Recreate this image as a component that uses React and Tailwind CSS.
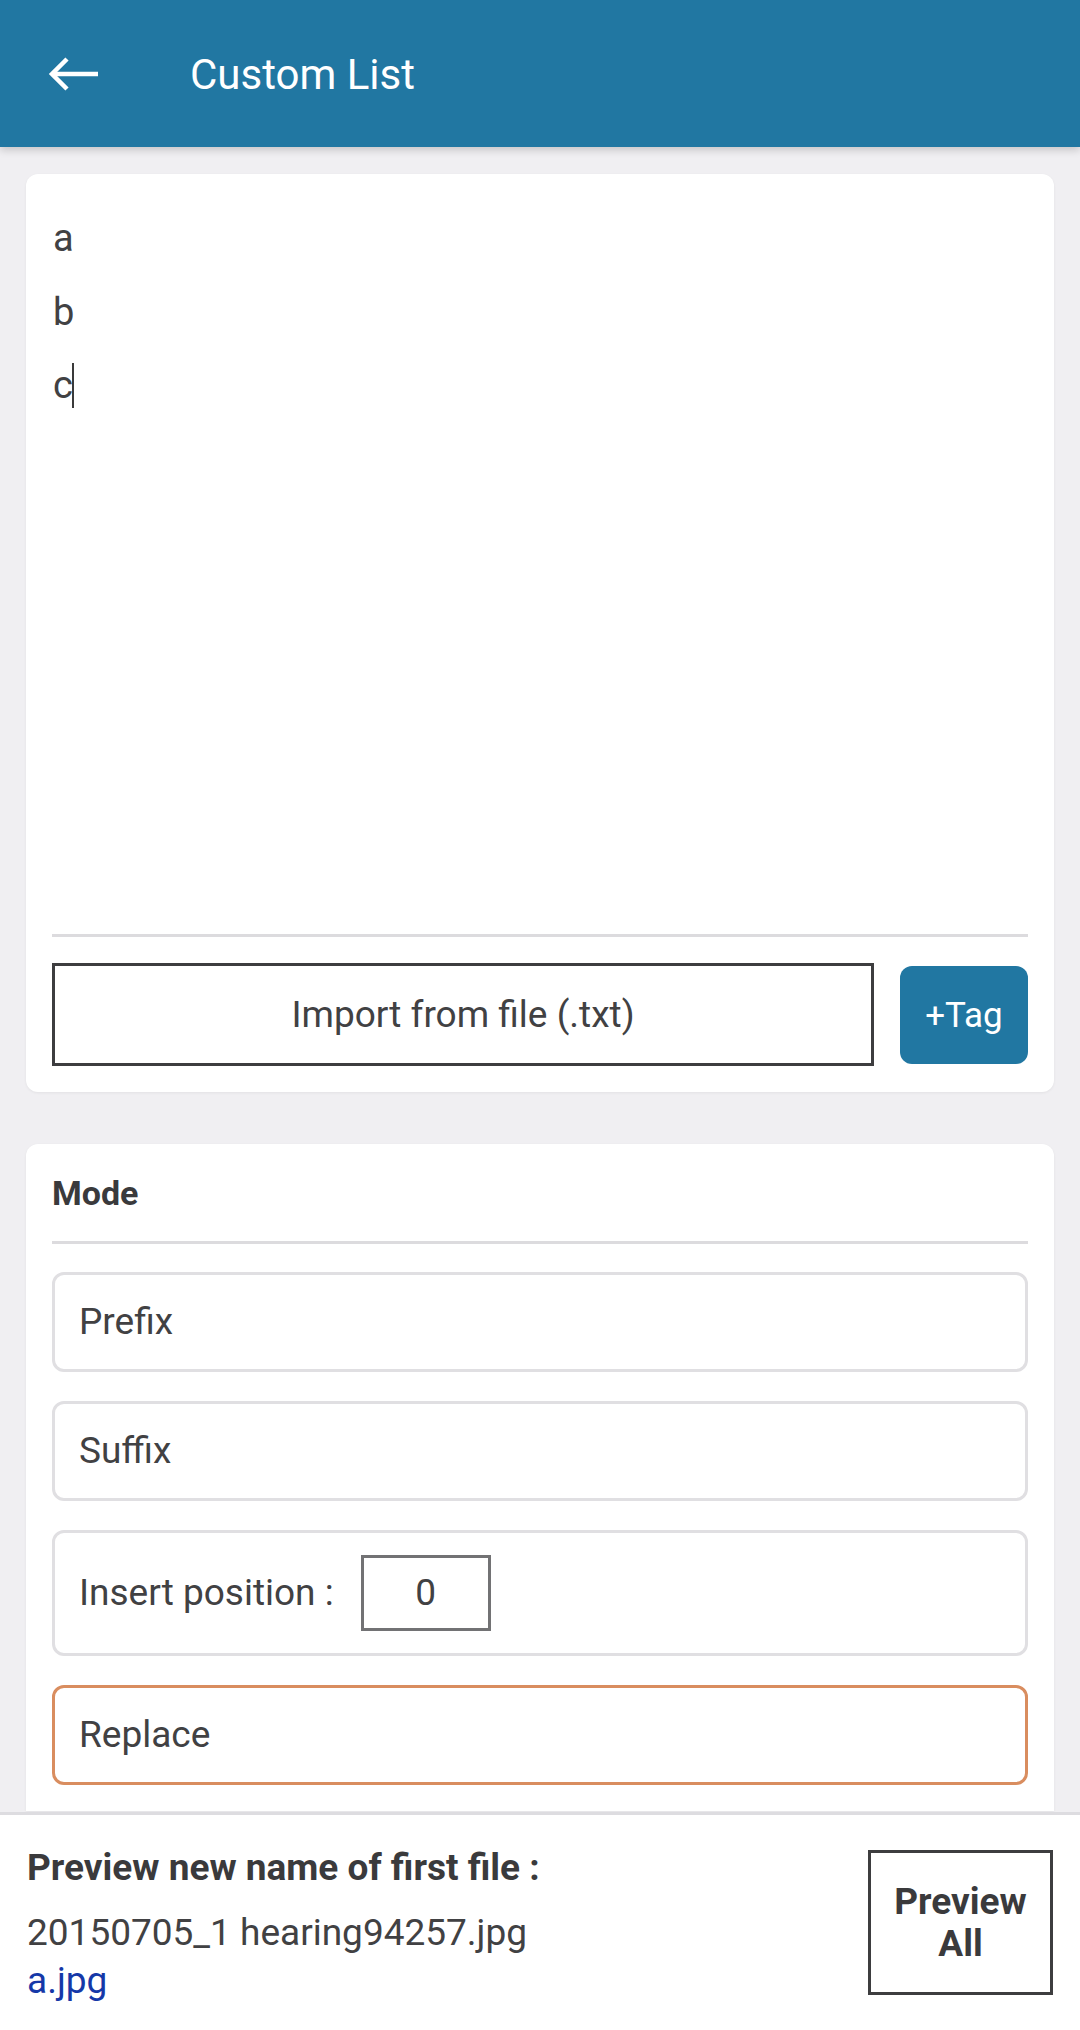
import React from 'react';

const font = { fontFamily: 'Roboto, "Noto Sans", sans-serif' };

const ModeBox = ({ children, active, tall }) => (
  <div
    className={`flex items-center rounded-[12px] border-[3px] bg-white pl-[24px] text-[37px] text-[#414143] ${
      active ? 'border-[#d98d5f]' : 'border-[#e0dfe2]'
    } ${tall ? 'h-[126px]' : 'h-[100px]'}`}
  >
    {children}
  </div>
);

export default function App() {
  return (
    <div className="flex h-[2030px] w-[1080px] flex-col overflow-hidden bg-[#f0eff2]" style={font}>
      {/* Toolbar */}
      <header className="relative z-10 flex h-[147px] shrink-0 items-center bg-[#2177a2] shadow-[0_3px_8px_rgba(0,0,0,0.18)]">
        <button className="ml-[48px] flex h-[40px] w-[54px] items-center">
          <svg width="52" height="36" viewBox="0 0 52 36" fill="none">
            <path d="M4 18H50" stroke="white" strokeWidth="4.5" />
            <path d="M19 3L4 18L19 33" stroke="white" strokeWidth="4.5" strokeLinejoin="miter" />
          </svg>
        </button>
        <h1 className="ml-[88px] pt-[2px] text-[42px] font-normal text-white">Custom List</h1>
      </header>

      {/* Scroll area */}
      <main className="flex-1 overflow-hidden">
        {/* List card */}
        <section className="mx-[26px] mt-[27px] rounded-[12px] bg-white px-[26px] pb-[26px] pt-[28px] shadow-[0_1px_3px_rgba(0,0,0,0.06)]">
          <div className="h-[732px] text-[38px] leading-[73.5px] text-[#414143]">
            <div className="pl-px">a</div>
            <div className="pl-px">b</div>
            <div className="flex items-center pl-px">
              c<span className="ml-[-1px] inline-block h-[45px] w-[2px] bg-[#3a3a3a]" />
            </div>
          </div>
          <div className="h-[3px] bg-[#dcdbde]" />
          <div className="mt-[26px] flex items-center gap-[26px]">
            <button className="flex h-[103px] flex-1 items-center justify-center border-[3px] border-[#3d3d3f] bg-white text-[37px] text-[#414143]">
              Import from file (.txt)
            </button>
            <button className="flex h-[98px] w-[128px] items-center justify-center rounded-[12px] bg-[#2177a2] pt-[3px] text-[35px] text-white">
              +Tag
            </button>
          </div>
        </section>

        {/* Mode card */}
        <section className="mx-[26px] mt-[52px] rounded-t-[12px] bg-white px-[26px] pt-[25px] pb-[26px] shadow-[0_1px_3px_rgba(0,0,0,0.06)]">
          <div className="h-[48px] text-[34px] font-bold leading-[48px] text-[#3a3a3c]">Mode</div>
          <div className="mt-[24px] h-[3px] bg-[#dcdbde]" />
          <div className="mt-[28px] flex flex-col gap-[29px]">
            <ModeBox>Prefix</ModeBox>
            <ModeBox>Suffix</ModeBox>
            <ModeBox tall>
              <span>Insert position :</span>
              <div className="ml-[27px] flex h-[76px] w-[130px] items-center justify-center border-[3px] border-[#727274] text-[37px]">
                0
              </div>
            </ModeBox>
            <ModeBox active>Replace</ModeBox>
          </div>
        </section>
      </main>

      {/* Preview footer */}
      <footer className="flex h-[218px] shrink-0 items-center justify-between border-t-[3px] border-[#dddce0] bg-white pl-[27px] pr-[27px]">
        <div className="flex flex-col pt-[6px]">
          <div className="text-[37px] font-bold leading-[44px] text-[#3a3a3c]">Preview new name of first file :</div>
          <div className="mt-[19px] text-[37px] leading-[48px] text-[#414143]">20150705_1 hearing94257.jpg</div>
          <div className="text-[37px] leading-[48px] text-[#1538a8]">a.jpg</div>
        </div>
        <button className="flex h-[145px] w-[185px] flex-col items-center justify-center border-[3px] border-[#3d3d3f] text-[37px] font-bold leading-[42px] text-[#3a3a3c]">
          <span>Preview</span>
          <span>All</span>
        </button>
      </footer>
    </div>
  );
}
